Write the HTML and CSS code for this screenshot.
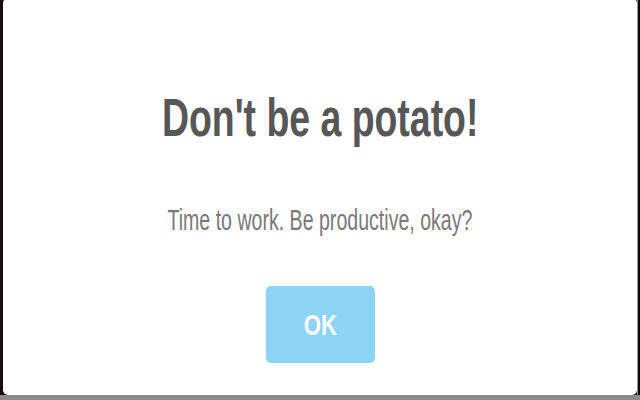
FILE: index.html
```html
<!DOCTYPE html>
<html>
<head>
<meta charset="utf-8">
<link rel="stylesheet" href="styles.css">
</head>
<body>
<div class="stage">
  <div class="alert">
    <h2 class="title"><span class="squish squish-title">Don't be a potato!</span></h2>
    <p class="text"><span class="squish squish-text">Time to work. Be productive, okay?</span></p>
    <button class="confirm"><span class="squish squish-btn">OK</span></button>
  </div>
</div>
<div class="floor"></div>
</body>
</html>
```
FILE: styles.css
```css
html, body {
  margin: 0;
  padding: 0;
  width: 640px;
  height: 400px;
  overflow: hidden;
}
body {
  background: #120a0c;
  font-family: "Liberation Sans", Arial, sans-serif;
}
.stage {
  height: 395px;
  padding: 0 3px;
  display: flex;
  background: linear-gradient(to right, #1b0b0f 0, #1b0b0f 3px, transparent 3px), linear-gradient(to left, #0a0a0a 0, #0a0a0a 2px, #9a9a9a 2px, #9a9a9a 3px, transparent 3px);
}
.alert {
  flex: 1;
  margin-top: -2px;
  background: #fff;
  border-radius: 5px;
  display: flex;
  flex-direction: column;
  align-items: center;
  padding-top: 90px;
}
.floor {
  height: 5px;
  background: #8a8a8a;
}
.squish {
  display: inline-block;
  white-space: nowrap;
}
.squish-title { transform: scaleX(0.706); }
.squish-text { transform: scaleX(0.675); }
.squish-btn { transform: scaleX(0.74); }
.title {
  margin: 0;
  font-size: 53px;
  line-height: 60px;
  font-weight: bold;
  color: #575757;
}
.text {
  margin: 55px 0 0;
  font-size: 29px;
  line-height: 34px;
  color: #797979;
}
.confirm {
  margin-top: 49px;
  width: 109px;
  height: 77px;
  border: none;
  border-radius: 5px;
  background: #8cd4f5;
  color: #fff;
  font-family: "Liberation Sans", Arial, sans-serif;
  font-size: 30px;
  font-weight: bold;
  padding: 0;
}
```
